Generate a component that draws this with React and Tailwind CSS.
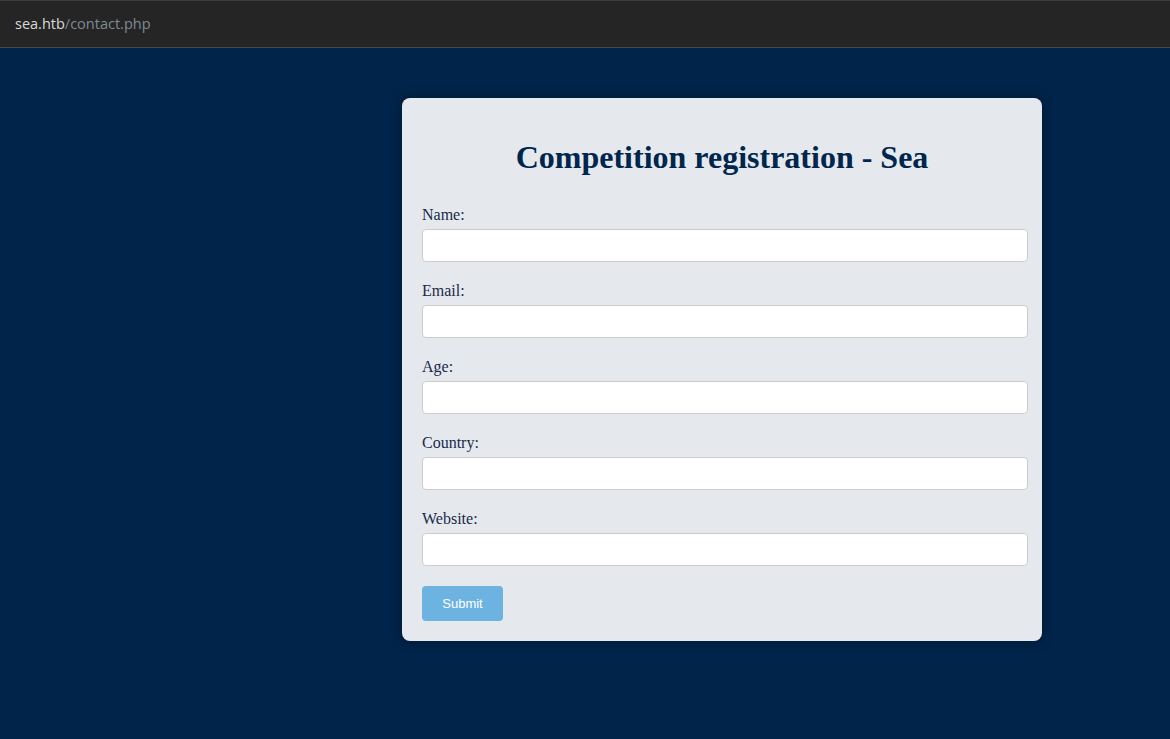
export default function App() {
  const fields = ["Name:", "Email:", "Age:", "Country:", "Website:"];

  return (
    <div className="min-h-[739px] w-full bg-[#00244a] flex flex-col">
      <div className="h-[48px] bg-[#252525] border-t border-[#3a3a3a] border-b border-b-[#4a4a4a] flex items-center px-[15px] font-['Open_Sans',sans-serif] text-[14.5px]">
        <span className="text-[#d8d8d8]">sea.htb</span>
        <span className="text-[#7f8a92]">/contact.php</span>
      </div>

      <div className="pt-[50px] pl-[402px]">
        <div className="w-[640px] bg-[#e5e9ed] rounded-[8px] shadow-[0_0_12px_rgba(0,0,0,0.35)] px-[20px] pt-[41px] pb-[20px] font-['Liberation_Serif',serif] text-[#002147]">
          <h1 className="text-[32px] leading-[37px] font-bold text-center text-[#00264d]">
            Competition registration - Sea
          </h1>
          <form className="mt-[29px] flex flex-col">
            {fields.map((f) => (
              <div key={f} className="flex flex-col mb-[19px]">
                <label className="pt-[1px] text-[16px] leading-[18px] text-[#1a2a4a]">{f}</label>
                <input
                  type="text"
                  className="mt-[5px] w-[606px] h-[33px] bg-white border border-[#cccccc] rounded-[4px] px-2 outline-none"
                />
              </div>
            ))}
            <button
              type="button"
              className="mt-[1px] w-[81px] h-[35px] bg-[#6db3e2] text-white rounded-[4px] text-[13px] font-['Liberation_Sans',sans-serif]"
            >
              Submit
            </button>
          </form>
        </div>
      </div>
    </div>
  );
}
